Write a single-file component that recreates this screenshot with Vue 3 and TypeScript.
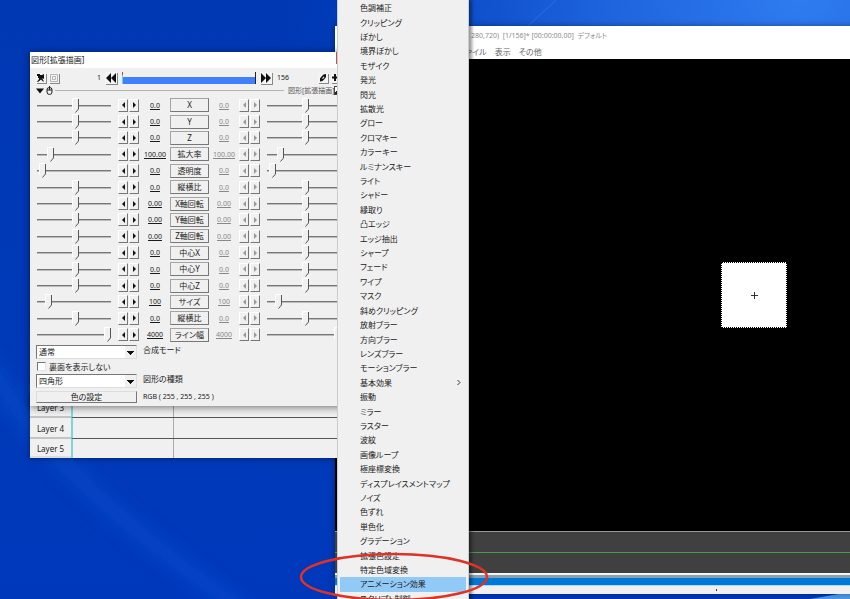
<script setup lang="ts">
import { ref } from 'vue'

interface Param {
  name: string
  value: string
  position: number
}

const centered = 52

const params = ref<Param[]>([
  { name: 'X', value: '0.0', position: centered },
  { name: 'Y', value: '0.0', position: centered },
  { name: 'Z', value: '0.0', position: centered },
  { name: '拡大率', value: '100.00', position: 15 },
  { name: '透明度', value: '0.0', position: 3 },
  { name: '縦横比', value: '0.0', position: centered },
  { name: 'X軸回転', value: '0.00', position: centered },
  { name: 'Y軸回転', value: '0.00', position: centered },
  { name: 'Z軸回転', value: '0.00', position: centered },
  { name: '中心X', value: '0.0', position: centered },
  { name: '中心Y', value: '0.0', position: centered },
  { name: '中心Z', value: '0.0', position: centered },
  { name: 'サイズ', value: '100', position: 12 },
  { name: '縦横比', value: '0.0', position: centered },
  { name: 'ライン幅', value: '4000', position: 100 },
])

const filters: string[] = [
  '色調補正', 'クリッピング', 'ぼかし', '境界ぼかし', 'モザイク', '発光', '閃光', '拡散光',
  'グロー', 'クロマキー', 'カラーキー', 'ルミナンスキー', 'ライト', 'シャドー', '縁取り',
  '凸エッジ', 'エッジ抽出', 'シャープ', 'フェード', 'ワイプ', 'マスク', '斜めクリッピング',
  '放射ブラー', '方向ブラー', 'レンズブラー', 'モーションブラー', '基本効果', '振動', 'ミラー',
  'ラスター', '波紋', '画像ループ', '極座標変換', 'ディスプレイスメントマップ', 'ノイズ',
  '色ずれ', '単色化', 'グラデーション', '拡張色設定', '特定色域変換', 'アニメーション効果',
  'スクリプト制御',
]
const selected = ref('アニメーション効果')
const layers = ['Layer 3', 'Layer 4', 'Layer 5']
const hideBack = ref(false)
const frame = ref(1)
</script>

<template>
  <main class="desktop">
    <svg class="wallpaper" viewBox="0 0 850 599" preserveAspectRatio="none" aria-hidden="true">
      <defs>
        <radialGradient id="glow" cx="800" cy="-10" r="520" gradientUnits="userSpaceOnUse">
          <stop offset="0" stop-color="#2f7cf0" />
          <stop offset="0.4" stop-color="#1c62dc" />
          <stop offset="0.75" stop-color="#0846c4" />
          <stop offset="1" stop-color="#003ab6" stop-opacity="0" />
        </radialGradient>
        <linearGradient id="base" x1="0" y1="0" x2="0" y2="1">
          <stop offset="0" stop-color="#0038b4" />
          <stop offset="0.7" stop-color="#003ab8" />
          <stop offset="1" stop-color="#0038bc" />
        </linearGradient>
        <filter id="soft" x="-20%" y="-20%" width="140%" height="140%">
          <feGaussianBlur stdDeviation="9" />
        </filter>
      </defs>
      <rect width="850" height="599" fill="url(#base)" />
      <rect width="850" height="599" fill="url(#glow)" />
      <path d="M-20 350C30 440 110 520 250 615" fill="none" stroke="#0b58d8" stroke-width="14" opacity=".5" filter="url(#soft)" />
      <path d="M528 26L556 0" stroke="#4b90f4" stroke-width="1" opacity=".4" />
      <path d="M810 599L850 592V599Z" fill="#4d9cf0" />
    </svg>

    <section class="window preview">
      <header class="preview-title">280,720)&nbsp; [1/156]* [00:00:00.00]&nbsp; デフォルト</header>
      <nav class="preview-menu">
        <a href="#">ファイル</a>
        <a href="#">表示</a>
        <a href="#">その他</a>
      </nav>
      <div class="canvas">
        <div class="shape">
          <svg width="9" height="9" viewBox="0 0 9 9" aria-hidden="true">
            <path d="M4.500 1V8M1 4.500H8" stroke="#333" fill="none" />
          </svg>
        </div>
      </div>
      <div class="wave"></div>
      <div class="seek"></div>
      <footer class="status"><i class="tick"></i></footer>
    </section>

    <section class="window timeline">
      <div v-for="layer in layers" :key="layer" class="layer">
        <button type="button" class="layer-name">{{ layer }}</button>
        <div class="layer-track"></div>
      </div>
    </section>

    <section class="window dialog">
      <header class="dialog-title">
        <span>図形[拡張描画]</span>
        <button type="button" class="close" aria-label="閉じる"></button>
      </header>

      <div class="dialog-body">
        <div class="transport">
          <button type="button" class="tool" aria-label="カメラ">
            <svg width="10" height="10" viewBox="0 0 10 10"><path d="M1 1H4V2H6L8 1V6L6 5L8 8.500H7L5 6.500L2 9H1L3 6V5H2V3H1Z" fill="#111" /></svg>
          </button>
          <button type="button" class="tool" aria-label="クリッピング">
            <svg width="10" height="10" viewBox="0 0 10 10"><path d="M1.500 1.500H8.500V8.500H1.500Z M3.500 3.500H6.500V6.500H3.500Z" fill="none" stroke="#b4b4b4" /></svg>
          </button>
          <output class="first">1</output>
          <button type="button" class="tool jump" aria-label="先頭">
            <svg width="12" height="12" viewBox="0 0 12 12"><path d="M6 1V11L1 6ZM11 1V11L6 6Z" fill="#111" /></svg>
          </button>
          <input v-model="frame" class="range-bar" type="range" min="1" max="156" aria-label="フレーム">
          <button type="button" class="tool jump" aria-label="末尾">
            <svg width="12" height="12" viewBox="0 0 12 12"><path d="M1 1V11L6 6ZM6 1V11L11 6Z" fill="#111" /></svg>
          </button>
          <output class="last">156</output>
          <button type="button" class="tool" aria-label="リンク">
            <svg width="10" height="10" viewBox="0 0 10 10"><path d="M5.500 1.500L8 1V4L6.500 6L4.500 8L2 8.500V5.500L3.500 3.500ZM5.500 3.500L4 5.500L5 6L6.500 4Z" fill="#111" fill-rule="evenodd" /></svg>
          </button>
          <button type="button" class="tool" aria-label="追加">
            <svg width="10" height="10" viewBox="0 0 10 10"><path d="M4 1V8M1 4.500H8" stroke="#111" stroke-width="2" /></svg>
          </button>
        </div>

        <div class="group-head">
          <svg width="8" height="6" viewBox="0 0 8 6" aria-hidden="true"><path d="M0 0.500H8L4 5.500Z" fill="#111" /></svg>
          <svg width="7" height="9" viewBox="0 0 7 9" aria-hidden="true">
            <path d="M1 3.500Q1 1.500 3.500 1.500Q6 1.500 6 3.500V6Q6 8.500 3.500 8.500Q1 8.500 1 6ZM1 4H6M3.500 0V4" fill="none" stroke="#222" />
          </svg>
          <span class="rule"></span>
          <label for="enabled">図形[拡張描画]</label>
          <input id="enabled" class="box" type="checkbox" checked>
        </div>

        <div class="params">
          <template v-for="(p, i) in params" :key="i">
            <input v-model="p.position" class="slider" type="range" min="0" max="100" :aria-label="p.name">
            <span class="spin">
              <button type="button" aria-label="減らす"><i class="arrow left"></i></button>
              <button type="button" aria-label="増やす"><i class="arrow right"></i></button>
            </span>
            <output class="value">{{ p.value }}</output>
            <button type="button" class="raised name">{{ p.name }}</button>
            <output class="value dim">{{ p.value }}</output>
            <span class="spin dim">
              <button type="button" disabled aria-label="減らす"><i class="arrow left"></i></button>
              <button type="button" disabled aria-label="増やす"><i class="arrow right"></i></button>
            </span>
            <input v-model="p.position" class="slider" type="range" min="0" max="100" :aria-label="p.name">
          </template>
        </div>

        <div class="options">
          <select id="blend" class="combo"><option>通常</option></select>
          <label for="blend">合成モード</label>
          <label class="check"><input v-model="hideBack" class="box" type="checkbox">裏面を表示しない</label>
          <select id="kind" class="combo"><option>四角形</option></select>
          <label for="kind">図形の種類</label>
          <button type="button" class="raised color">色の設定</button>
          <span class="small">RGB ( 255 , 255 , 255 )</span>
        </div>
      </div>
    </section>

    <menu class="popup">
      <li v-for="f in filters" :key="f">
        <button type="button" :class="{ active: f === selected }" @click="selected = f">
          <span>{{ f }}</span>
          <svg v-if="f === '基本効果'" width="4" height="7" viewBox="0 0 4 7" aria-hidden="true">
            <path d="M0.500 1L3 3.500L0.500 6" fill="none" stroke="#333" />
          </svg>
        </button>
      </li>
    </menu>

    <svg class="marker" width="190" height="50" viewBox="0 0 190 50" aria-hidden="true">
      <ellipse cx="95" cy="25" rx="93" ry="23" fill="none" stroke="#dd3226" stroke-width="2.500" />
    </svg>
  </main>
</template>

<style>
body {
  margin: 0;
  overflow: hidden;
}
</style>

<style scoped>
.desktop {
  position: relative;
  height: 100vh;
  overflow: hidden;
  background: #0038b6;
  color: #1a1a1a;
  font-family: "Noto Sans", "Noto Sans CJK JP", sans-serif;
  font-size: 8px;
  line-height: 12px;
  font-feature-settings: "palt";
}
.desktop * {
  box-sizing: border-box;
}
button,
select,
input {
  margin: 0;
  padding: 0;
  border: 0;
  border-radius: 0;
  font: inherit;
  font-feature-settings: inherit;
  color: inherit;
}
svg {
  display: block;
}
.wallpaper {
  position: absolute;
  inset: 0;
  width: 100%;
  height: 100%;
}
.window {
  position: absolute;
  background: #f0f0f0;
}

/* preview window */
.preview {
  left: 335px;
  top: 26px;
  bottom: 5px;
  width: 838px;
  display: flex;
  flex-direction: column;
  box-shadow: 0 0 6px rgba(0, 0, 0, 0.4);
}
.preview-title {
  height: 19px;
  padding-left: 136px;
  background: #fff;
  color: #8c8c8c;
  font-size: 7px;
  line-height: 20px;
}
.preview-menu {
  display: flex;
  gap: 8px;
  height: 14px;
  padding-left: 124px;
  background: #fff;
  line-height: 14px;
}
.preview-menu a {
  color: #666;
  text-decoration: none;
}
.canvas {
  flex: 1;
  display: flex;
  align-items: center;
  justify-content: center;
  background: #000;
}
.shape {
  display: flex;
  align-items: center;
  justify-content: center;
  width: 66px;
  height: 66px;
  border: 1px dotted #000;
  background: #fff;
}
.wave {
  height: 42px;
  border-top: 1px solid #999;
  background: linear-gradient(#4a9a4a, #4a9a4a) 0 20px / 100% 1px no-repeat #404040;
}
.seek {
  height: 13px;
  border-top: 2px solid #f4f4f4;
  border-bottom: 1px solid #a8dcff;
  background: linear-gradient(#86a0b0 3px, #0078d7 3px);
}
.status {
  display: flex;
  align-items: center;
  height: 8px;
  padding-left: 381px;
}
.tick {
  width: 1px;
  height: 2px;
  background: #333;
}

/* timeline window */
.timeline {
  left: 30px;
  top: 397px;
  width: 307px;
  box-shadow: 0 0 6px rgba(0, 0, 0, 0.5);
}
.layer {
  display: flex;
  height: 21px;
}
.layer:last-child {
  height: 19px;
}
.layer-name {
  width: 41px;
  padding-top: 2px;
  border-bottom: 2px solid #c4c4c4;
  background: #f0f0f0;
}
.layer:last-child .layer-name {
  border-bottom-color: #ddd;
}
.layer-track {
  flex: 1;
  border-left: 2px solid #7ed6d6;
  border-bottom: 1px solid #555;
  background: linear-gradient(#aaa, #aaa) 100px 0 / 1px 100% no-repeat;
}
.layer:last-child .layer-track {
  border-bottom: 0;
}

/* object dialog */
.dialog {
  left: 30px;
  top: 52px;
  width: 325px;
  box-shadow: 0 1px 8px rgba(0, 0, 0, 0.55);
}
.dialog-title {
  display: flex;
  justify-content: space-between;
  height: 16px;
  padding-left: 1px;
  background: #fff;
  line-height: 15px;
}
.close {
  width: 19px;
  height: 12px;
  background: #c75050;
}
.dialog-body {
  padding: 3px 6px 3px;
}
.transport {
  display: flex;
  align-items: center;
  gap: 3px;
  height: 13px;
}
.tool {
  flex: none;
  background: #f4f4f4;
  box-shadow: 1px 1px 0 #888;
}
.first {
  width: 39px;
  font-size: 7px;
  text-align: right;
}
.jump {
  margin-left: 1px;
}
.last {
  width: 40px;
  padding-left: 2px;
  font-size: 7px;
}
.range-bar {
  appearance: none;
  width: 134px;
  height: 12px;
  margin-left: 2px;
  border-right: 1px solid #222;
  background: linear-gradient(#4080ff, #4080ff) 0 5px / 100% 7px no-repeat;
}
.range-bar::-webkit-slider-thumb {
  appearance: none;
  width: 1px;
  height: 12px;
  background: linear-gradient(#d84040 3px, #50d8f0 3px);
}
.group-head {
  display: flex;
  align-items: center;
  gap: 2px;
  height: 13px;
  color: #555;
  font-size: 7px;
}
.rule {
  flex: none;
  width: 229px;
  height: 1px;
  background: #b4b4b4;
}
.group-head label {
  width: 44px;
  margin-left: 2px;
  white-space: nowrap;
}
.box {
  appearance: none;
  flex: none;
  width: 9px;
  height: 9px;
  border: 1px solid;
  border-color: #777 #e4e4e4 #e4e4e4 #777;
  background: #fff;
}
.group-head .box {
  border-color: #444;
  background: linear-gradient(135deg, #fff 40%, #222 40%, #222 60%, #fff 60%);
}
.params {
  display: grid;
  grid-template-columns: 81px 22px 30px 39px 30px 28px 74px;
  grid-template-rows: repeat(15, 1fr);
  align-items: center;
  height: 246px;
  padding-left: 1px;
}
.slider {
  appearance: none;
  width: 74px;
  height: 15px;
  background: linear-gradient(#777 1px, #bbb 1px) 0 7px / 100% 2px no-repeat;
}
.slider::-webkit-slider-thumb {
  appearance: none;
  width: 7px;
  height: 15px;
  background: url("data:image/svg+xml,%3Csvg xmlns='http://www.w3.org/2000/svg' width='7' height='15'%3E%3Cpath d='M0 0H7V11L3 15L0 12Z' fill='%23f0f0f0'/%3E%3Cpath d='M0.500 12V0.500H6' fill='none' stroke='%23fff'/%3E%3Cpath d='M6.500 1V11L3.500 14.500' fill='none' stroke='%23555'/%3E%3C/svg%3E");
}
.spin {
  display: flex;
  gap: 1px;
}
.spin button {
  display: flex;
  align-items: center;
  justify-content: center;
  width: 10px;
  height: 13px;
  border: 1px solid;
  border-color: #fff #777 #777 #fff;
  background: #f0f0f0;
}
.arrow {
  border: 3px solid transparent;
}
.arrow.left {
  border-left-width: 0;
  border-right-color: #111;
}
.arrow.right {
  border-right-width: 0;
  border-left-color: #111;
}
.dim .arrow.left {
  border-right-color: #999;
}
.dim .arrow.right {
  border-left-color: #999;
}
.value {
  padding-top: 1px;
  font-size: 7px;
  text-align: center;
  text-decoration: underline;
}
.value.dim {
  color: #888;
}
.raised {
  border: 1px solid;
  border-color: #ddd #777 #777 #ddd;
  background: #f0f0f0;
  white-space: nowrap;
}
.name {
  height: 14px;
  border-color: #a4a4a4 #777 #777 #a4a4a4;
  line-height: 12px;
}
.options {
  display: grid;
  grid-template-columns: 101px auto;
  grid-template-rows: 14px 9px 14px 12px;
  column-gap: 6px;
  row-gap: 3px;
  padding-top: 2px;
}
.options label {
  line-height: 10px;
}
.small {
  font-size: 7px;
}
.combo {
  appearance: none;
  padding-left: 2px;
  border: 1px solid;
  border-color: #777 #ddd #ddd #777;
  background:
    conic-gradient(from -45deg at 50% 100%, #111 90deg, transparent 0) right 2px top 5px / 6px 3px no-repeat,
    linear-gradient(#f0f0f0, #f0f0f0) right 0 top 0 / 10px 100% no-repeat,
    #fff;
  /* the arrow is drawn pointing down by tapering from its top edge */
  background:
    conic-gradient(from -45deg at 50% 100%, #111 90deg, #f0f0f0 0) right 2px top 5px / 7px 4px no-repeat,
    linear-gradient(#f0f0f0, #f0f0f0) right 0 top 0 / 11px 100% no-repeat,
    #fff;
}
.check {
  grid-column: 1 / -1;
  display: flex;
  align-items: center;
  gap: 3px;
  padding-left: 1px;
}
.color {
  line-height: 10px;
}

/* filter menu */
.popup {
  position: absolute;
  left: 337px;
  top: 0;
  width: 132px;
  height: calc(100% + 7px);
  margin: 0;
  padding: 1px 2px 0;
  display: grid;
  grid-auto-rows: 1fr;
  border: solid #ccc;
  border-width: 0 1px;
  background: #f0f0f0;
  list-style: none;
  box-shadow: 3px 0 3px rgba(0, 0, 0, 0.4);
}
.popup li {
  display: flex;
  min-height: 0;
}
.popup button {
  display: flex;
  flex: 1;
  align-items: center;
  justify-content: space-between;
  padding: 0 5px 0 20px;
  background: none;
  white-space: nowrap;
}
.popup button.active {
  background: #91c9f7;
}
.marker {
  position: absolute;
  left: 299px;
  bottom: -3px;
}
</style>
